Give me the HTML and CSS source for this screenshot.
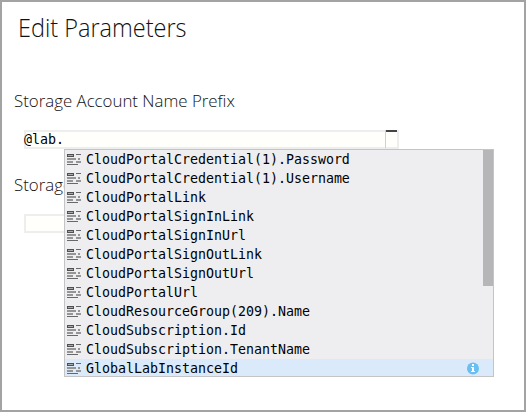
FILE: index.html
```html
<!DOCTYPE html>
<html lang="en">
<head>
<meta charset="utf-8">
<title>Edit Parameters</title>
<link rel="stylesheet" href="styles.css">
</head>
<body>
<main class="dialog">
  <h1 class="title"><span>Edit Parameters</span></h1>
  <label class="label"><span>Storage Account Name Prefix</span></label>
  <div class="field">
    <div class="editor"><span>@lab.</span><i class="ruler"></i></div>
    <ul class="suggest" id="suggest"></ul>
  </div>
  <label class="label label-second"><span>Storage</span></label>
  <div class="field"><div class="editor"></div></div>
</main>
<script src="script.js"></script>
</body>
</html>
```
FILE: styles.css
```css
* { box-sizing: border-box; }
body { margin: 0; }
.dialog {
  width: 526px;
  height: 412px;
  padding: 10px 12px 0;
  border: 2px solid #a3a3a3;
  background: #fff;
  color: #111;
  font-family: "Open Sans", sans-serif;
  font-weight: 300;
  overflow: hidden;
}
.title {
  margin: 0 0 0 4px;
  height: 30px;
  line-height: 30px;
  font-size: 25px;
  font-weight: 300;
  white-space: nowrap;
}
.title span { display: inline-block; transform-origin: 0 50%; transform: scaleX(.94); }
.label {
  display: block;
  margin-top: 48px;
  height: 22px;
  line-height: 22px;
  font-size: 16.4px;
  white-space: nowrap;
}
.label span { display: inline-block; transform-origin: 0 50%; transform: scaleX(1.027); }
.label-second { margin-top: 25px; }
.field {
  position: relative;
  margin: 18px 0 0 10px;
  width: 375px;
}
.editor {
  display: flex;
  justify-content: space-between;
  height: 19px;
  border: 2px solid #eee;
  background: #fffffc;
  font: 13.29px/15px "DejaVu Sans Mono", monospace;
  color: #000;
}
.editor span { margin-left: -2px; }
.ruler {
  width: 14px;
  height: 19px;
  margin: -2px -2px 0 0;
  border-left: 1px solid #d0d0d0;
  border-right: 2px solid #eee;
  border-bottom: 2px solid #eee;
  background: linear-gradient(#444, #444) 0 0 / 100% 2px no-repeat border-box;
}
.suggest {
  position: absolute;
  z-index: 2;
  left: 40px;
  top: 19px;
  width: 430px;
  height: 228px;
  margin: 0;
  padding: 0;
  list-style: none;
  overflow: hidden;
  border: 1px solid #c4c4c4;
  background: #eeeef0;
  font: 13.29px/19px "DejaVu Sans Mono", monospace;
  color: #000;
}
.suggest::after {
  content: "";
  position: absolute;
  right: 0;
  top: 0;
  width: 10px;
  height: 136px;
  background: #b6b6b8;
}
.item { display: flex; height: 19px; padding-right: 14px; }
.item svg { flex: none; }
.item .name { flex: 1; margin-left: 3px; }
.selected { background: #dbeafb; }
```
FILE: script.js
```js
const names = ["CloudPortalCredential(1).Password", "CloudPortalCredential(1).Username", "CloudPortalLink", "CloudPortalSignInLink", "CloudPortalSignInUrl", "CloudPortalSignOutLink", "CloudPortalSignOutUrl", "CloudPortalUrl", "CloudResourceGroup(209).Name", "CloudSubscription.Id", "CloudSubscription.TenantName", "GlobalLabInstanceId"];
const icon = '<svg width="18" height="19" shape-rendering="crispEdges"><path fill="#505050" d="M2 4h7v3H2z"/><path fill="#aaa" d="M3 5h5v1H3z"/><path fill="#686868" d="M11 4h5v1h-5zM2 14h11v1H2z"/><path fill="#959595" d="M2 8h9v2H2zM13 8h2v2h-2zM2 11h6v2H2zM11 11h5v2h-5z"/></svg>';
const info = '<svg width="14" height="19"><circle cx="8" cy="9.4" r="6" fill="#69bfef"/><path fill="#fff" d="M7 5h2v2H7zM6 8h3v4h1v1H6v-1h1V9H6z"/></svg>';
document.getElementById("suggest").innerHTML = names.map((name, i) => {
  const last = i === names.length - 1;
  return `<li class="item${last ? " selected" : ""}">${icon}<span class="name">${name}</span>${last ? info : ""}</li>`;
}).join("");
```
